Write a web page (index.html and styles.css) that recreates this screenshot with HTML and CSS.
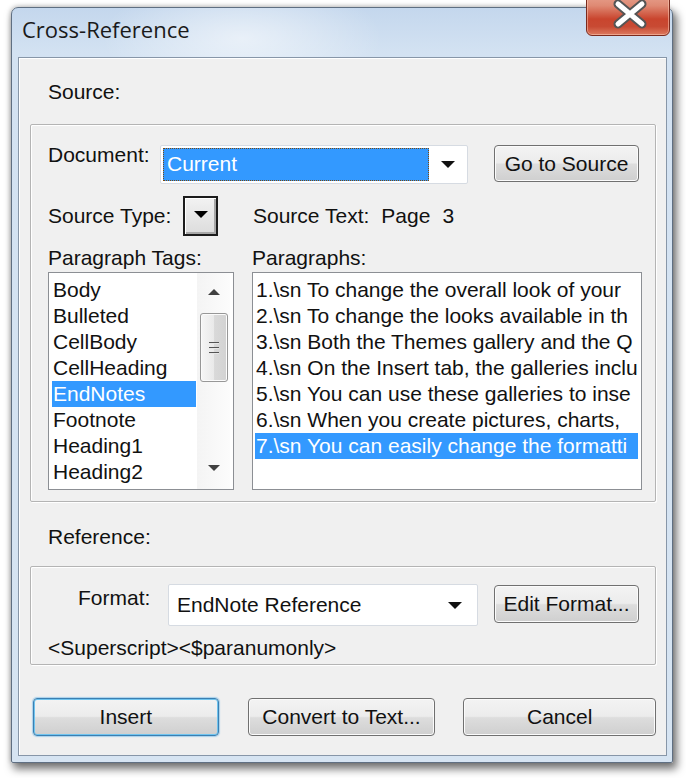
FILE: index.html
```
<!DOCTYPE html>
<html>
<head>
<meta charset="utf-8">
<link rel="stylesheet" href="styles.css">
</head>
<body>
<div class="window">
  <div class="titlebar">
    <span class="title">Cross-Reference</span>
    <div class="close">
      <svg width="84" height="44" viewBox="0 0 84 44">
        <path d="M32 12 L56 32 M56 12 L32 32" stroke="#555555" stroke-width="9" stroke-linecap="round" fill="none"/>
        <path d="M32 12 L56 32 M56 12 L32 32" stroke="#ffffff" stroke-width="5" stroke-linecap="round" fill="none"/>
      </svg>
    </div>
  </div>
  <div class="client">
    <div class="section-label">Source:</div>
    <div class="group source-group">
      <div class="row doc-row">
        <div class="label doc-label">Document:</div>
        <div class="combo doc-combo">
          <div class="combo-sel">Current</div>
          <div class="combo-arrow"><span class="tri"></span></div>
        </div>
        <div class="btn go-btn">Go to Source</div>
      </div>
      <div class="row type-row">
        <div class="label type-label">Source Type:</div>
        <div class="mini-drop"><span class="tri"></span></div>
        <div class="label source-text">Source Text:<span class="sp">Page</span><span class="sp">3</span></div>
      </div>
      <div class="lists">
        <div class="col col-left">
          <div class="label">Paragraph Tags:</div>
          <div class="listbox tags">
            <div class="items">
              <div class="item">Body</div>
              <div class="item">Bulleted</div>
              <div class="item">CellBody</div>
              <div class="item">CellHeading</div>
              <div class="item selected">EndNotes</div>
              <div class="item">Footnote</div>
              <div class="item">Heading1</div>
              <div class="item">Heading2</div>
            </div>
            <div class="sb">
              <div class="sb-up"><span class="tri-up"></span></div>
              <div class="sb-thumb"><span class="grip"></span><span class="grip"></span><span class="grip"></span></div>
              <div class="sb-space"></div>
              <div class="sb-down"><span class="tri-down"></span></div>
            </div>
          </div>
        </div>
        <div class="col col-right">
          <div class="label">Paragraphs:</div>
          <div class="listbox paras">
            <div class="items">
              <div class="item">1.\sn To change the overall look of your</div>
              <div class="item">2.\sn To change the looks available in th</div>
              <div class="item">3.\sn Both the Themes gallery and the Q</div>
              <div class="item">4.\sn On the Insert tab, the galleries inclu</div>
              <div class="item">5.\sn You can use these galleries to inse</div>
              <div class="item">6.\sn When you create pictures, charts,</div>
              <div class="item selected">7.\sn You can easily change the formatti</div>
            </div>
          </div>
        </div>
      </div>
    </div>
    <div class="section-label ref-label">Reference:</div>
    <div class="group ref-group">
      <div class="row fmt-row">
        <div class="label fmt-label">Format:</div>
        <div class="combo fmt-combo">
          <div class="combo-text">EndNote Reference</div>
          <div class="combo-arrow"><span class="tri"></span></div>
        </div>
        <div class="btn edit-btn">Edit Format...</div>
      </div>
      <div class="label fmt-code">&lt;Superscript&gt;&lt;$paranumonly&gt;</div>
    </div>
    <div class="buttons">
      <div class="btn default insert-btn">Insert</div>
      <div class="btn convert-btn">Convert to Text...</div>
      <div class="btn cancel-btn">Cancel</div>
    </div>
  </div>
</div>
</body>
</html>
```
FILE: styles.css
```
html, body {
  margin: 0;
  padding: 0;
  background: #ffffff;
  width: 686px;
  height: 778px;
  overflow: hidden;
}
body {
  font-family: "Liberation Sans", Arial, sans-serif;
  font-size: 21px;
  color: #111;
}
.window {
  position: relative;
  box-sizing: border-box;
  margin: 7px 0 0 11px;
  width: 662px;
  height: 756px;
  border: 1px solid #5f6f82;
  border-radius: 7px 7px 2px 2px;
  padding: 0 5px 6px 6px;
  display: flex;
  flex-direction: column;
  background:
    radial-gradient(ellipse 140px 60px at 230px 30px, rgba(255,255,255,0.55), rgba(255,255,255,0) 100%),
    linear-gradient(to bottom, #c4d7ed 0px, #d3e2f2 45px, #d6e4f2 100%);
  box-shadow: 3px 5px 8px 1px rgba(0,0,0,0.55), -1px -1px 4px rgba(0,0,0,0.18);
}
.titlebar {
  height: 49px;
  box-sizing: border-box;
  padding: 6px 0 0 4px;
}
.title {
  font-family: "Open Sans", "Noto Sans", sans-serif;
  font-size: 22px;
  line-height: 30px;
  color: #1a1a1a;
}
.close {
  position: absolute;
  top: -16px;
  right: 2px;
  width: 84px;
  height: 44px;
  box-sizing: border-box;
  border: 1px solid #7b2a1d;
  border-radius: 0 0 6px 6px;
  background: linear-gradient(to bottom, #e8a592 0%, #df8a74 30%, #c9452e 62%, #c84a33 80%, #dd7a5f 100%);
  box-shadow: inset 0 0 0 1px rgba(255,210,190,0.5);
  overflow: hidden;
}
.close svg {
  display: block;
  margin: -1px 0 0 -1px;
}
.client {
  flex: 1;
  background: #f0f0f0;
  border: 1px solid #8796a8;
  box-shadow: inset 1px 1px 0 #ffffff;
  padding: 21px 10px 0 11px;
  display: flex;
  flex-direction: column;
}
.label {
  line-height: 26px;
  white-space: nowrap;
}
.section-label {
  line-height: 26px;
  padding-left: 18px;
}
.group {
  border: 1px solid #b4b4b4;
  box-shadow: inset 1px 1px 0 #ffffff, 1px 1px 0 #ffffff;
  border-radius: 2px;
}
.source-group {
  margin-top: 19px;
  padding: 17px 13px 11px 17px;
}
.row {
  display: flex;
  align-items: flex-start;
}
.doc-label {
  width: 112px;
}
.combo {
  box-sizing: border-box;
  background: #ffffff;
  border: 1px solid #d6dbe2;
  border-radius: 2px;
  display: flex;
}
.doc-combo {
  margin-top: 3px;
  width: 308px;
  height: 39px;
  padding: 2px 0 2px 2px;
}
.combo-sel {
  flex: 1;
  background: #3399ff;
  color: #ffffff;
  border: 1px dotted #7a4a10;
  line-height: 30px;
  padding-left: 3px;
}
.combo-arrow {
  width: 38px;
  display: flex;
  align-items: center;
  justify-content: center;
}
.tri {
  width: 0;
  height: 0;
  border-left: 7px solid transparent;
  border-right: 7px solid transparent;
  border-top: 7px solid #111;
}
.btn {
  box-sizing: border-box;
  border: 1px solid #707070;
  border-radius: 4px;
  background: linear-gradient(to bottom, #f3f3f3 0%, #ececec 48%, #dddddd 52%, #cfcfcf 100%);
  box-shadow: inset 0 0 0 1px #fbfbfb;
  text-align: center;
  white-space: nowrap;
}
.go-btn {
  margin-top: 3px;
  margin-left: 26px;
  width: 145px;
  height: 37px;
  line-height: 35px;
}
.type-row {
  margin-top: 12px;
}
.type-label {
  width: 135px;
  margin-top: 7px;
}
.mini-drop {
  box-sizing: border-box;
  width: 35px;
  height: 40px;
  border: 2px solid #1c1c1c;
  background: linear-gradient(to bottom, #f2f2f2, #dcdcdc);
  box-shadow: inset 1px 1px 0 #ffffff, inset -2px -2px 0 #a8a8a8;
  display: flex;
  justify-content: center;
  padding-top: 13px;
}
.mini-drop .tri {
  border-top-color: #000;
}
.source-text {
  margin-left: 35px;
  margin-top: 7px;
}
.sp {
  margin-left: 12px;
}
.lists {
  margin-top: 9px;
  display: flex;
  gap: 18px;
}
.col-left {
  width: 186px;
}
.col-right {
  width: 390px;
}
.listbox {
  margin-top: 1px;
  box-sizing: border-box;
  height: 218px;
  background: #ffffff;
  border: 1px solid #8c8f94;
  display: flex;
  overflow: hidden;
}
.items {
  padding-top: 4px;
  overflow: hidden;
}
.item {
  line-height: 26px;
  height: 26px;
  padding-left: 1px;
  white-space: nowrap;
  overflow: hidden;
  color: #111;
}
.item.selected {
  background: #3399ff;
  color: #ffffff;
}
.tags .items {
  margin-left: 3px;
  width: 144px;
}
.paras .items {
  margin-left: 2px;
  width: 383px;
}
.sb {
  margin-left: 1px;
  width: 33px;
  display: flex;
  flex-direction: column;
  background: linear-gradient(to right, #f4f4f4, #fcfcfc);
}
.sb-up {
  height: 38px;
  display: flex;
  align-items: center;
  justify-content: center;
}
.sb-space {
  flex: 1;
}
.sb-down {
  height: 42px;
  display: flex;
  align-items: center;
  justify-content: center;
}
.tri-up {
  width: 0;
  height: 0;
  border-left: 6px solid transparent;
  border-right: 6px solid transparent;
  border-bottom: 6px solid #404040;
}
.tri-down {
  width: 0;
  height: 0;
  border-left: 6px solid transparent;
  border-right: 6px solid transparent;
  border-top: 6px solid #404040;
}
.sb-thumb {
  margin: 2px 2px 0 3px;
  height: 69px;
  box-sizing: border-box;
  border: 1px solid #979797;
  border-radius: 3px;
  background: linear-gradient(to right, #f6f6f6 0%, #e9e9e9 50%, #d9d9d9 52%, #d2d2d2 100%);
  box-shadow: inset 0 0 0 1px #fbfbfb;
  display: flex;
  flex-direction: column;
  align-items: center;
  justify-content: center;
  gap: 3px;
}
.grip {
  width: 10px;
  height: 1px;
  background: #555;
  border-bottom: 1px solid #e8e8e8;
}
.ref-label {
  margin-top: 22px;
}
.ref-group {
  margin-top: 16px;
  padding: 17px 13px 3px 17px;
}
.fmt-label {
  box-sizing: border-box;
  width: 120px;
  padding-left: 30px;
  margin-top: 1px;
}
.fmt-combo {
  width: 310px;
  height: 42px;
  padding-left: 8px;
}
.combo-text {
  flex: 1;
  line-height: 40px;
}
.fmt-combo .combo-arrow {
  width: 44px;
}
.edit-btn {
  margin-top: 1px;
  margin-left: 16px;
  width: 145px;
  height: 38px;
  line-height: 36px;
}
.fmt-code {
  margin-top: 9px;
}
.buttons {
  margin-top: 33px;
  padding-left: 3px;
  display: flex;
}
.buttons .btn {
  height: 38px;
  line-height: 36px;
}
.insert-btn {
  width: 186px;
  border-color: #3c7fb1;
  box-shadow: inset 0 0 0 1px #6fc4ef, 0 0 1px 1px rgba(80,170,230,0.45);
}
.convert-btn {
  width: 188px;
  margin-left: 29px;
}
.cancel-btn {
  width: 193px;
  margin-left: 28px;
}
```
